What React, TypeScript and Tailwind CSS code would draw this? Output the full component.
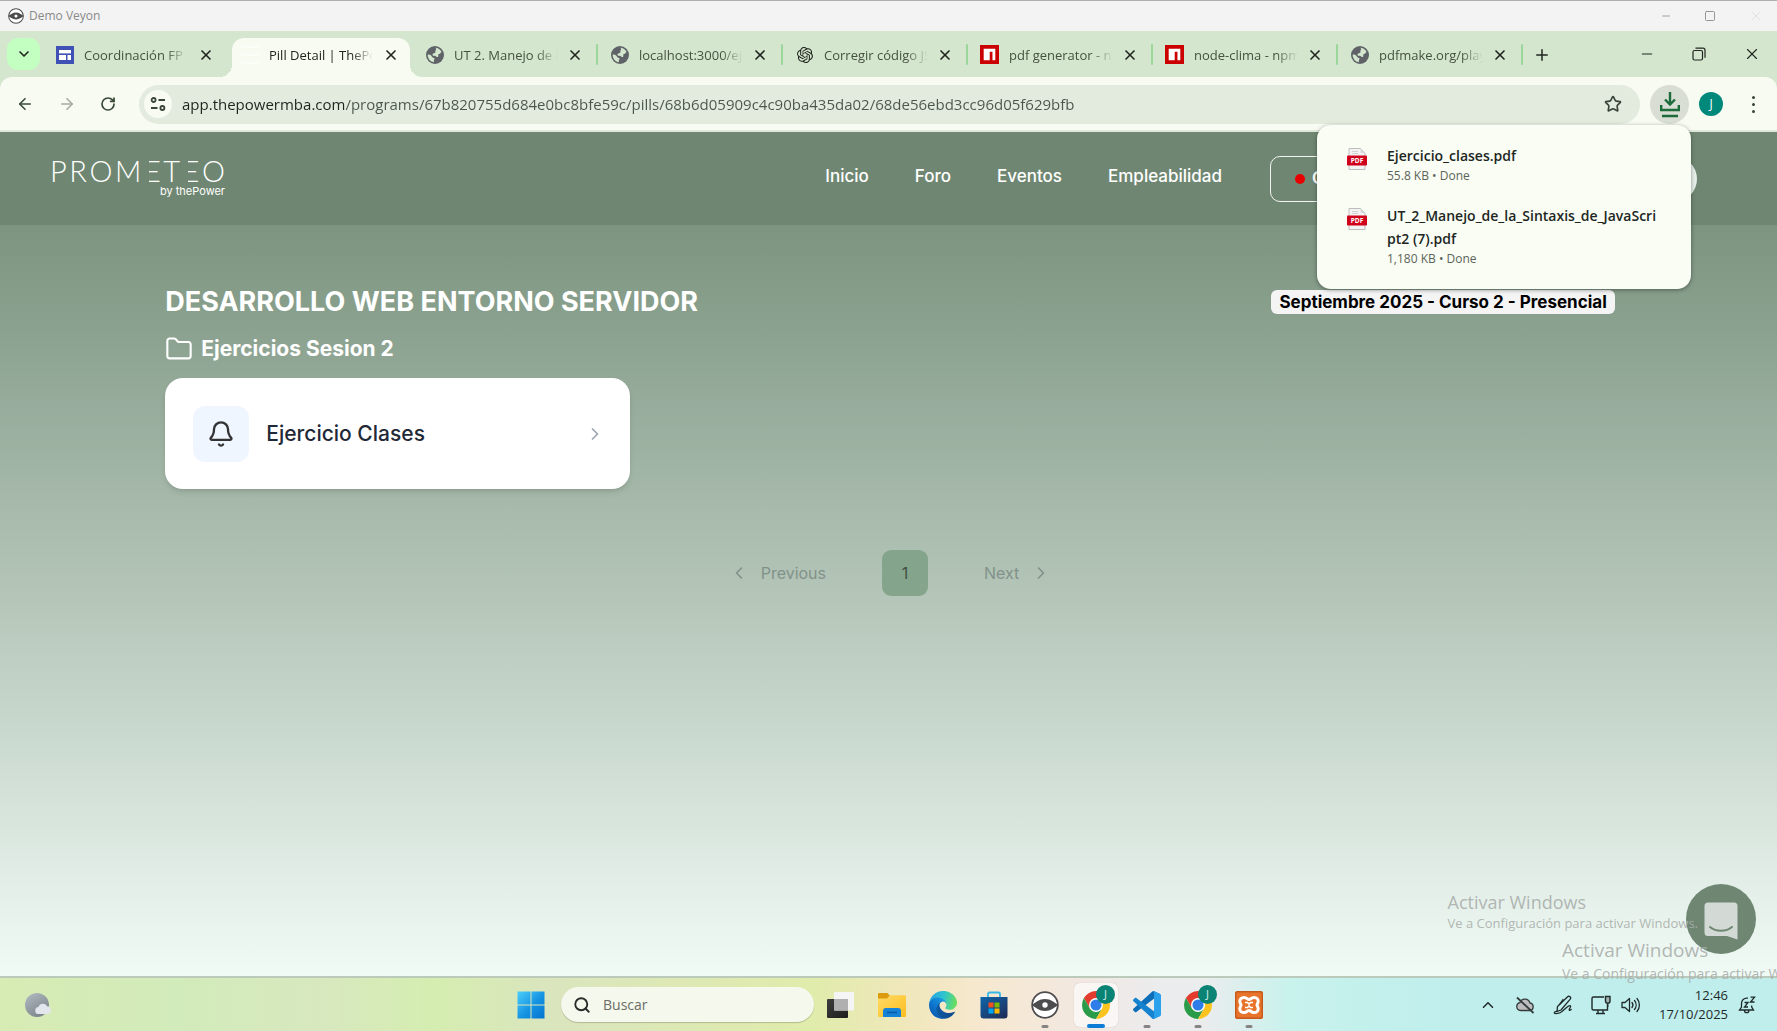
import React from "react";
import {
  ArrowLeft,
  ArrowRight,
  Bell,
  ChevronDown,
  ChevronLeft,
  ChevronRight,
  ChevronUp,
  Folder,
  Minus,
  Plus,
  RotateCw,
  Search,
  Square,
  Star,
  X,
} from "lucide-react";
import { SiOpenai } from "react-icons/si";

function SitesIcon() {
  return (
    <svg viewBox="0 0 18 18" className="size-[18px]" aria-hidden="true">
      <rect width="18" height="18" fill="#3f51b5" />
      <rect x="3" y="4" width="12" height="3.4" fill="#fff" />
      <rect x="3" y="9" width="7" height="5" fill="#fff" />
      <rect x="11.5" y="9" width="3.5" height="5" fill="#fff" />
    </svg>
  );
}

function BlankPageIcon() {
  return (
    <svg viewBox="0 0 18 18" className="size-[18px]" aria-hidden="true">
      <path d="M0 1h18M0 9h18M0 17h18" stroke="#fff" strokeWidth="1" />
    </svg>
  );
}

function GlobeIcon() {
  return (
    <svg viewBox="0 0 24 24" className="size-[18px]" aria-hidden="true">
      <circle cx="12" cy="12" r="12" fill="#5f6368" />
      <path
        d="M12.5 2.4c3.6.2 6.6 2.3 8.2 5.2l-1.6 2.2c-.9 1-2 .8-2.6 1.6-.6.9.5 1.8-.3 2.8-.6.8-1.9.4-2.6-.3-.9-.9-2.600-.4-3.900-.9-1.200-.5-1.200-1.700-.6-2.600.7-1 2.300-.7 3.100-1.500.7-.8.1-1.900.5-2.900.3-.8 1-1.200.8-2.200z"
        fill="#d5e6cf"
      />
      <path
        d="M2.200 11.500c1.700-.2 3.500 0 4.600 1 1 .9 1 2.100 2.100 2.700 1 .5 2.300.4 2.500 1.600.2 1.100-.9 1.700-1 2.800 0 .8.300 1.400.1 2.100A9.900 9.900 0 0 1 2.200 11.500z"
        fill="#d5e6cf"
      />
    </svg>
  );
}

function NpmIcon() {
  return (
    <svg viewBox="0 0 18 18" className="size-[19px]" aria-hidden="true">
      <rect width="18" height="18" fill="#cb0000" />
      <path d="M3.500 3.500h11v11h-2.700V6.300H9.200v8.200H3.500z" fill="#fff" />
    </svg>
  );
}

function EyeLogo({ className }: { className: string }) {
  return (
    <svg viewBox="0 0 28 28" className={className} aria-hidden="true">
      <circle cx="14" cy="14" r="12.800" fill="#fff" stroke="#4d4d4f" strokeWidth="1.800" />
      <path d="M.5 14C5 11.500 8 8 14 8s9 3.500 13.500 6C23 16.500 20 20 14 20S5 16.500.5 14z" fill="#4d4d4f" />
      <circle cx="14" cy="14" r="5" fill="#4d4d4f" />
      <circle cx="14" cy="14" r="2.700" fill="#fff" />
    </svg>
  );
}

function TuneIcon() {
  return (
    <svg viewBox="0 0 16 16" className="size-4" fill="none" stroke="#3a4439" strokeWidth="1.800" aria-hidden="true">
      <circle cx="3.600" cy="4" r="2" />
      <path d="M8.500 4H15M1 12h6.500" />
      <circle cx="12.400" cy="12" r="2" />
    </svg>
  );
}

function DownloadsIcon() {
  return (
    <svg viewBox="0 0 20 28" className="h-7 w-5" fill="none" stroke="#1d6b3a" strokeWidth="2.400" aria-hidden="true">
      <path d="M10 2v12M5 9.500l5 5 5-5M1.200 15v5h17.600v-5M2 26h16" />
    </svg>
  );
}

function RestoreIcon() {
  return (
    <svg viewBox="0 0 14 14" className="size-3.5" fill="none" stroke="#20261f" strokeWidth="1.200" aria-hidden="true">
      <rect x="1" y="3.500" width="9.500" height="9.500" rx="1.500" />
      <path d="M3.500 1.200H11a2 2 0 0 1 2 2v7.500" />
    </svg>
  );
}

function PdfIcon() {
  return (
    <svg viewBox="0 0 20 22" className="h-[22px] w-5 shrink-0" role="img" aria-label="PDF">
      <path d="M2 .5h11.500L18 5v16.500H2z" fill="#f4f4f4" stroke="#bdbdbd" strokeWidth="1" />
      <path d="M13.500.5V5H18z" fill="#d9d9d9" />
      <path d="M5 3.500h6M5 5.500h6" stroke="#d3d3d3" strokeWidth="1" />
      <rect y="7.500" width="20" height="10" rx=".8" fill="#d0021b" />
      <text x="10" y="15" textAnchor="middle" fontSize="6.500" fontWeight="700" fill="#fff" className="font-['Open_Sans',sans-serif]">
        PDF
      </text>
    </svg>
  );
}

function WeatherIcon() {
  return (
    <svg viewBox="0 0 28 28" className="size-7" aria-hidden="true">
      <defs>
        <linearGradient id="moon" x1="0" y1="0" x2="0.600" y2="1">
          <stop offset="0" stopColor="#b3bcc2" />
          <stop offset="1" stopColor="#7d868d" />
        </linearGradient>
      </defs>
      <circle cx="13" cy="14" r="12" fill="url(#moon)" />
      <path d="M14 23a3.500 3.500 0 0 1 .4-6.900 4.800 4.800 0 0 1 9-.6A3.800 3.800 0 0 1 23.800 23z" fill="#e3e6ec" />
    </svg>
  );
}

function WindowsIcon() {
  return (
    <svg viewBox="0 0 28 28" className="size-7" aria-hidden="true">
      <defs>
        <linearGradient id="win" x1="0" y1="0" x2="28" y2="28" gradientUnits="userSpaceOnUse">
          <stop offset="0" stopColor="#4fd0fb" />
          <stop offset="0.550" stopColor="#1492e2" />
          <stop offset="1" stopColor="#0472cf" />
        </linearGradient>
      </defs>
      <path d="M.5.500h13v13H.5zM14.500.500h13v13h-13zM.5 14.500h13v13H.5zM14.500 14.500h13v13h-13z" fill="url(#win)" />
    </svg>
  );
}

function TaskViewIcon() {
  return (
    <svg viewBox="0 0 28 28" className="size-7" aria-hidden="true">
      <defs>
        <linearGradient id="tv" x1="0" y1="0" x2="1" y2="1">
          <stop offset="0" stopColor="#3e3e3e" />
          <stop offset="1" stopColor="#1d1d1d" />
        </linearGradient>
      </defs>
      <rect x="0" y="8" width="21" height="19" rx="1" fill="url(#tv)" />
      <rect x="7" y="1" width="20" height="18.500" rx="1" fill="#f5f5f5" />
      <rect x="7" y="8" width="14" height="11.500" fill="#b0b0b0" />
    </svg>
  );
}

function ExplorerIcon() {
  return (
    <svg viewBox="0 0 28 28" className="size-7" aria-hidden="true">
      <defs>
        <linearGradient id="fold" x1="0" y1="0" x2="1" y2="1">
          <stop offset="0" stopColor="#ffdb66" />
          <stop offset="1" stopColor="#fcbd1f" />
        </linearGradient>
      </defs>
      <path d="M0 3a1 1 0 0 1 1-1h8.500l2.500 3v4H0z" fill="#dc9a0d" />
      <path d="M0 7.500h9l3-3.300h15a1 1 0 0 1 1 1V25a1 1 0 0 1-1 1H1a1 1 0 0 1-1-1z" fill="url(#fold)" />
      <path d="M5 26v-6a3 3 0 0 1 3-3h12a3 3 0 0 1 3 3v6z" fill="#1583d5" />
      <path d="M9 21.500h10" stroke="#0b5aa5" strokeWidth="1.500" />
    </svg>
  );
}

function EdgeIcon() {
  return (
    <svg viewBox="0 0 256 256" className="size-7" aria-hidden="true">
      <defs>
        <linearGradient id="edgeA" x1="60" y1="177" x2="241" y2="177" gradientUnits="userSpaceOnUse">
          <stop offset="0" stopColor="#0c59a4" />
          <stop offset="1" stopColor="#114a8b" />
        </linearGradient>
        <linearGradient id="edgeB" x1="160" y1="84" x2="46" y2="208" gradientUnits="userSpaceOnUse">
          <stop offset="0" stopColor="#1b9de2" />
          <stop offset="0.600" stopColor="#0f7ad0" />
          <stop offset="1" stopColor="#0a62b8" />
        </linearGradient>
        <linearGradient id="edgeC" x1="20" y1="60" x2="240" y2="110" gradientUnits="userSpaceOnUse">
          <stop offset="0" stopColor="#2aa7e0" />
          <stop offset="0.500" stopColor="#2fc5cd" />
          <stop offset="1" stopColor="#66dd62" />
        </linearGradient>
      </defs>
      <path
        fill="url(#edgeA)"
        d="M231 190.500c-3.400 1.800-6.900 3.400-10.500 4.700a101.500 101.500 0 0 1-35.900 6.400c-47.300 0-88.500-32.500-88.500-74.300 0-11.400 6.400-21.900 16.400-27.300-42.800 1.800-53.800 46.400-53.800 72.500 0 73.900 68.100 81.400 82.800 81.400 7.900 0 19.800-2.300 27-4.600l1.300-.4a128.400 128.400 0 0 0 66.600-52.800 4 4 0 0 0-5.400-5.600z"
      />
      <path
        fill="url(#edgeB)"
        d="M105.700 241.400a79.200 79.200 0 0 1-22.700-21.300 80.700 80.700 0 0 1 29.500-120c3.200-1.500 8.500-4.100 15.600-4a32.400 32.400 0 0 1 25.700 13 31.900 31.900 0 0 1 6.300 18.700c0-.2 24.500-79.600-80-79.600-43.900 0-80 41.600-80 78.200a130.200 130.200 0 0 0 12.100 56 128 128 0 0 0 156.400 67 75.500 75.500 0 0 1-62.800-8z"
      />
      <path
        fill="url(#edgeC)"
        d="M152.300 148.900c-.9 1-3.400 2.500-3.400 5.600 0 2.600 1.700 5.200 4.800 7.300 14.400 10.100 41.700 8.800 41.800 8.800 10.700 0 21.100-2.900 30.300-8.300a61.400 61.400 0 0 0 30.400-52.900c.3-22.400-8-37.300-11.300-43.900C223.500 23.900 177.700 0 128 0A128 128 0 0 0 0 126.200c.5-36.500 36.800-66 80-66 3.500 0 23.500.3 42 10.100 16.300 8.500 24.900 18.900 30.800 29.200 6.200 10.700 7.300 24.100 7.300 29.500 0 5.300-2.700 13.300-7.800 19.900z"
      />
    </svg>
  );
}

function StoreIcon() {
  return (
    <svg viewBox="0 0 28 28" className="size-7" aria-hidden="true">
      <defs>
        <linearGradient id="store" x1="0" y1="0" x2="0.800" y2="1">
          <stop offset="0" stopColor="#0f66ab" />
          <stop offset="1" stopColor="#1d2f5c" />
        </linearGradient>
      </defs>
      <path d="M8 7V3a1.500 1.500 0 0 1 1.500-1.500h9A1.500 1.500 0 0 1 20 3v4" fill="none" stroke="#35b8e6" strokeWidth="1.800" />
      <path d="M.5 6h27v18.500a3 3 0 0 1-3 3h-21a3 3 0 0 1-3-3z" fill="url(#store)" />
      <rect x="8.500" y="11.500" width="5" height="5" fill="#f25022" />
      <rect x="14.500" y="11.500" width="5" height="5" fill="#7fba00" />
      <rect x="8.500" y="17.500" width="5" height="5" fill="#00a4ef" />
      <rect x="14.500" y="17.500" width="5" height="5" fill="#ffb900" />
    </svg>
  );
}

function ChromeIcon() {
  return (
    <span className="relative block size-7">
      <svg viewBox="2 2 44 44" className="size-7" aria-hidden="true">
        <circle cx="24" cy="24" r="21" fill="#fff" />
        <path d="M4.950 13a22 22 0 0 1 38.100 0H24L14.470 29.500z" fill="#e33b2e" />
        <path d="M4.950 13l9.520 16.500L24 35l9.530-5.500L24 46A22 22 0 0 1 4.950 13z" fill="#2a9b48" />
        <path d="M43.050 13A22 22 0 0 1 24 46l9.530-16.500L24 13z" fill="#fcc31e" />
        <circle cx="24" cy="24" r="11" fill="#fff" />
        <circle cx="24" cy="24" r="8.700" fill="#2f7de9" />
      </svg>
      <span className="absolute -top-[6px] left-[14px] flex size-[19px] items-center justify-center rounded-full bg-[#0b8374] text-[11px] text-[#d4ece8]">
        J
      </span>
    </span>
  );
}

function CodeIcon() {
  return (
    <svg viewBox="0 0 100 100" className="size-7" aria-hidden="true">
      <path
        d="M96.500 10.800 75.900.9c-2.400-1.150-5.200-.66-7.100 1.200L1.300 63.600c-1.800 1.660-1.800 4.500 0 6.100l5.500 5c1.500 1.350 3.700 1.450 5.300.24L93.400 13.300C96.100 11.200 100 13.100 100 16.500v-.24c0-2.400-1.400-4.600-3.500-5.500z"
        fill="#0e6fb8"
      />
      <path
        d="M96.500 89.200 75.900 99.100c-2.400 1.150-5.200.66-7.100-1.200L1.300 36.400c-1.800-1.660-1.800-4.500 0-6.100l5.500-5c1.500-1.350 3.700-1.450 5.300-.24L93.400 86.700C96.100 88.800 100 86.900 100 83.500v.24c0 2.400-1.400 4.600-3.500 5.500z"
        fill="#1583cf"
      />
      <path
        d="M75.900 99.100c-2.400 1.150-5.200.66-7.100-1.200 2.300 2.300 6.300.7 6.300-2.600V4.700c0-3.300-4-4.900-6.300-2.600 1.900-1.900 4.700-2.400 7.100-1.200l20.600 9.900c2.100 1 3.500 3.200 3.500 5.600v67.200c0 2.400-1.400 4.600-3.500 5.600z"
        fill="#2ba1ec"
      />
    </svg>
  );
}

function XamppIcon() {
  return (
    <svg viewBox="0 0 28 28" className="size-7" aria-hidden="true">
      <rect width="28" height="28" rx="2.500" fill="#e8732a" />
      <rect x=".7" y=".7" width="26.600" height="26.600" rx="2" fill="none" stroke="#c65a1a" strokeWidth="1.400" />
      <path
        d="M9 6.500c-2.600 0-4.200 1.800-4.200 3.800 0 2 1.200 2.700 1.200 3.700s-1.200 1.700-1.200 3.700c0 2 1.600 3.800 4.200 3.800 2.900 0 3.300-2 5-2s2.100 2 5 2c2.600 0 4.200-1.800 4.200-3.800 0-2-1.200-2.700-1.200-3.700s1.200-1.700 1.200-3.700c0-2-1.600-3.800-4.200-3.800-2.900 0-3.300 2-5 2s-2.100-2-5-2z"
        fill="none"
        stroke="#fff"
        strokeWidth="3"
      />
      <path d="M10 11.500h2.500L14 13l1.500-1.500H18M10 16.500h2.500L14 15l1.500 1.500H18" fill="none" stroke="#fff" strokeWidth="1.600" />
    </svg>
  );
}

function CloudOffIcon() {
  return (
    <svg viewBox="0 0 20 20" className="size-5" fill="none" stroke="#333b3b" strokeWidth="1.300" aria-hidden="true">
      <path d="M5.500 15.500a4 4 0 0 1-.6-7.900 5.300 5.300 0 0 1 10.100.4 3.800 3.800 0 0 1 0 7.500z" fill="#bdbcbf" />
      <path d="M2 2.500 18.500 18" strokeWidth="1.800" />
    </svg>
  );
}

function PenIcon() {
  return (
    <svg viewBox="0 0 20 20" className="size-5" fill="none" stroke="#1f2a2a" strokeWidth="1.300" strokeLinecap="round" strokeLinejoin="round" aria-hidden="true">
      <path d="M4.500 11.500 14.600 1.800c1.600-1.400 4 .6 2.600 2.400L8 15l-4 1.300z" />
      <path d="M6.500 9.500 10 4.500M4 16.300c-1.500.2-3 .6-2.700 1.600.5 1.300 5.700.6 7.700-1.500l4-3.400c2-1.700 3.600-2.800 4.500-2.200 1.200.9-2.300 3.700-1.300 4.500.5.400 1.300-.2 2-.8" />
    </svg>
  );
}

function MonitorIcon() {
  return (
    <svg viewBox="0 0 20 20" className="size-5" fill="none" stroke="#1f2a2a" strokeWidth="1.400" aria-hidden="true">
      <path d="M13 2H2.500A1.500 1.500 0 0 0 1 3.500v10A1.500 1.500 0 0 0 2.500 15h14V9.500M7 15v3.500M12 15v3.500M5 18.500h9" />
      <path d="M14.500 1.500h4.500v4.500a2.200 2.200 0 0 1-4.500 0zM16.700 8v4" fill="#9fb5b5" />
    </svg>
  );
}

function SpeakerIcon() {
  return (
    <svg viewBox="0 0 20 20" className="size-5" fill="none" stroke="#1f2a2a" strokeWidth="1.300" strokeLinecap="round" aria-hidden="true">
      <path d="M1 7.500h3l4.500-4v13l-4.500-4H1z" strokeLinejoin="round" />
      <path d="M11 7.500a4 4 0 0 1 0 5M13.500 5.500a7 7 0 0 1 0 9M16 3.500a10 10 0 0 1 0 13" />
    </svg>
  );
}

function SnoozeBellIcon() {
  return (
    <svg viewBox="0 0 18 18" className="size-[18px]" fill="none" stroke="#1f2a2a" strokeWidth="1.300" aria-hidden="true">
      <path d="M10 2.200C5.800 1.500 3.500 4.500 3.500 7.500V11l-2 3h14l-1.800-3V9.500M6.500 14.500a2.200 2.200 0 0 0 4.400 0" />
      <path d="M6.500 6.500h3.500L6.500 11H10M12.500 1.200h4L12.500 6h4" />
    </svg>
  );
}

function ChatIcon() {
  return (
    <svg viewBox="0 0 34 38" className="h-[38px] w-[34px]" aria-hidden="true">
      <path d="M4 .5h26a3.500 3.500 0 0 1 3.500 3.500v33.500L23 34H4a3.500 3.500 0 0 1-3.500-3.500V4A3.500 3.500 0 0 1 4 .5z" fill="#d3dad5" />
      <path d="M6 25c6 5 16 5 22 0" fill="none" stroke="#6f8772" strokeWidth="2" strokeLinecap="round" />
    </svg>
  );
}

const tabs: { title: string; icon: React.ReactNode; active?: boolean; divider?: boolean }[] = [
  { title: "Coordinación FP", icon: <SitesIcon /> },
  { title: "Pill Detail | ThePower", icon: <BlankPageIcon />, active: true },
  { title: "UT 2. Manejo de la", icon: <GlobeIcon />, divider: true },
  { title: "localhost:3000/ejer", icon: <GlobeIcon />, divider: true },
  { title: "Corregir código JS", icon: <SiOpenai className="size-4 text-[#20261f]" />, divider: true },
  { title: "pdf generator - npm", icon: <NpmIcon />, divider: true },
  { title: "node-clima - npm", icon: <NpmIcon />, divider: true },
  { title: "pdfmake.org/playg", icon: <GlobeIcon />, divider: true },
];

function Tab({ title, icon, active, divider }: (typeof tabs)[number]) {
  return (
    <div
      className={
        "relative mt-[7px] flex h-[39px] min-w-0 flex-1 items-center pb-[6px] " +
        (active
          ? "mr-[3px] ml-1 max-w-[178px] rounded-t-xl bg-[#f8fbf2] pl-2 text-[#20261f] before:absolute before:bottom-0 before:-left-3 before:size-3 before:bg-[radial-gradient(circle_at_0_0,transparent_12px,#f8fbf2_12px)] after:absolute after:-right-3 after:bottom-0 after:size-3 after:bg-[radial-gradient(circle_at_100%_0,transparent_12px,#f8fbf2_12px)]"
          : "max-w-[185px] pl-3 text-[#45523f]")
      }
    >
      <button type="button" className="flex min-w-0 flex-1 items-center gap-2.5">
        <span className="flex w-[19px] shrink-0 justify-center">{icon}</span>
        <span className="w-[104px] overflow-hidden text-left text-[13px] leading-5 whitespace-nowrap [mask-image:linear-gradient(90deg,#000_82px,transparent_104px)]">
          {title}
        </span>
      </button>
      <button type="button" aria-label={"Cerrar " + title} className={"shrink-0 text-[#20261f] " + (active ? "mr-2.5" : "mr-[13px]")}>
        <X className="size-4" strokeWidth={2.500} />
      </button>
      {divider ? <span className="h-[21px] w-[2px] shrink-0 rounded-full bg-[#9bd69b]" /> : <span className="w-px shrink-0" />}
    </div>
  );
}

function LogoE() {
  return (
    <span className="relative before:absolute before:top-0 before:left-0 before:h-full before:w-[5px] before:bg-[#6f8772]">E</span>
  );
}

function TaskbarApp({ label, running, active, children }: { label: string; running?: boolean; active?: boolean; children: React.ReactNode }) {
  return (
    <button
      type="button"
      aria-label={label}
      className={"relative flex size-11 items-center justify-center rounded-md " + (active ? "bg-white/60 shadow-[0_0_1px_#00000040]" : "")}
    >
      {children}
      {running && (
        <span
          className={
            "absolute -bottom-px left-1/2 -translate-x-1/2 rounded-full " +
            (active ? "h-1 w-[18px] bg-[#0f7cd6]" : "h-[3px] w-[7px] bg-[#868483]")
          }
        />
      )}
    </button>
  );
}

export default function App() {
  return (
    <div className="relative flex min-h-screen flex-col overflow-hidden bg-[#f0faf5] font-['Open_Sans','Noto_Sans',sans-serif]">
      <div className="flex h-[31px] items-center border-t border-[#b0b0b0] bg-[#f3f3f3] pl-2 pr-[13px] text-xs text-[#8a8a8a]">
        <EyeLogo className="mr-[5px] size-4" />
        <span>Demo Veyon</span>
        <div className="ml-auto flex items-center gap-8">
          <button type="button" aria-label="Minimizar ventana">
            <Minus className="size-3" strokeWidth={1.500} />
          </button>
          <button type="button" aria-label="Maximizar ventana">
            <Square className="size-3" strokeWidth={1.800} />
          </button>
          <button type="button" aria-label="Cerrar ventana" className="text-[#dcdcdc]">
            <X className="size-4" strokeWidth={1.200} />
          </button>
        </div>
      </div>

      <div className="flex h-[46px] items-start bg-[#d5e6cf] pl-[7px]">
        <button type="button" aria-label="Buscar pestañas" className="mt-[7px] mr-[3px] flex h-8 w-[33px] items-center justify-center rounded-[11px] bg-[#c3ffc0] text-[#20261f]">
          <ChevronDown className="size-4" strokeWidth={2.500} />
        </button>
        {tabs.map((tab) => (
          <Tab key={tab.title} {...tab} />
        ))}
        <button type="button" aria-label="Nueva pestaña" className="mt-[15px] ml-[10px] text-[#20261f]">
          <Plus className="size-[18px]" strokeWidth={2} />
        </button>
        <div className="mt-[14px] ml-auto flex items-center gap-[37px] pr-4 text-[#20261f]">
          <button type="button" aria-label="Minimizar">
            <Minus className="size-4" strokeWidth={1.800} />
          </button>
          <button type="button" aria-label="Restaurar">
            <RestoreIcon />
          </button>
          <button type="button" aria-label="Cerrar">
            <X className="size-[18px]" strokeWidth={1.500} />
          </button>
        </div>
      </div>

      <div className="bg-[#d5e6cf]">
        <div className="relative flex h-[55px] items-center rounded-t-xl border-b-2 border-[#e0e8da] bg-[#f8fbf2] pt-px pr-[15px] pl-4">
          <div className="flex w-[123px] items-center gap-6 text-[#3a4a38]">
            <button type="button" aria-label="Atrás">
              <ArrowLeft className="size-[18px]" strokeWidth={2.200} />
            </button>
            <button type="button" aria-label="Adelante" className="text-[#a5ada2]">
              <ArrowRight className="size-[18px]" strokeWidth={2.200} />
            </button>
            <button type="button" aria-label="Recargar">
              <RotateCw className="size-4" strokeWidth={2.600} />
            </button>
          </div>
          <div className="flex h-[39px] flex-1 items-center rounded-full bg-[#e3ebdf] pr-[18px] pl-[5px]">
            <button type="button" aria-label="Información del sitio" className="mr-2.5 flex size-7 shrink-0 items-center justify-center rounded-full bg-[#f8fbf2]">
              <TuneIcon />
            </button>
            <input
              type="text"
              aria-label="Dirección"
              defaultValue="app.thepowermba.com/programs/67b820755d684e0bc8bfe59c/pills/68b6d05909c4c90ba435da02/68de56ebd3cc96d05f629bfb"
              className="min-w-0 flex-1 bg-[linear-gradient(90deg,#1d241d_162px,#4b554a_162px)] bg-clip-text text-[15px] text-transparent outline-none"
            />
            <button type="button" aria-label="Marcador" className="text-[#3a4439]">
              <Star className="size-[18px]" strokeWidth={2.200} />
            </button>
          </div>
          <button type="button" aria-label="Descargas" className="ml-2.5 flex size-[39px] items-center justify-center rounded-full bg-[#d8ded3]">
            <DownloadsIcon />
          </button>
          <button type="button" aria-label="Perfil" className="ml-2.5 flex size-6 items-center justify-center rounded-full bg-[#00897b] text-xs text-white">
            J
          </button>
          <button type="button" aria-label="Menú" className="ml-[21px] flex w-[18px] flex-col items-center gap-1 text-[#3a4439]">
            <span className="size-[3px] rounded-full bg-current" />
            <span className="size-[3px] rounded-full bg-current" />
            <span className="size-[3px] rounded-full bg-current" />
          </button>

          <div className="absolute top-12 right-[86px] z-20 flex w-[374px] flex-col gap-[19px] rounded-[14px] bg-[#fafdf3] pt-[19px] pr-6 pb-[21px] pl-[30px] text-[#20261f] shadow-[0_1px_4px_#00000066]">
            <div className="flex gap-5">
              <div className="pt-1">
                <PdfIcon />
              </div>
              <div className="min-w-0">
                <p className="text-sm leading-[23px] font-semibold">Ejercicio_clases.pdf</p>
                <p className="text-xs leading-[18px] text-[#5a645a]">55.8 KB • Done</p>
              </div>
            </div>
            <div className="flex gap-5">
              <div className="pt-1">
                <PdfIcon />
              </div>
              <div className="min-w-0">
                <p className="text-sm leading-[23px] font-semibold">
                  UT_2_Manejo_de_la_Sintaxis_de_JavaScri
                  <br />
                  pt2 (7).pdf
                </p>
                <p className="text-xs leading-[18px] text-[#5a645a]">1,180 KB • Done</p>
              </div>
            </div>
          </div>
        </div>
      </div>

      <header className="relative flex h-[93px] items-center bg-[#6f8772] pr-20 pb-1 pl-[50px] font-['Inter',sans-serif] text-white">
        <a href="#inicio" className="w-[175px]">
          <span className="flex justify-between font-['Lato',sans-serif] text-[29px] leading-7 font-light">
            <span>P</span>
            <span>R</span>
            <span>O</span>
            <span>M</span>
            <LogoE />
            <span>T</span>
            <LogoE />
            <span>O</span>
          </span>
          <span className="block text-right text-[11px] leading-3">by thePower</span>
        </a>
        <nav className="mr-12 ml-auto flex items-center gap-[46px] text-[17px] font-medium">
          <a href="#inicio">Inicio</a>
          <a href="#foro">Foro</a>
          <a href="#eventos">Eventos</a>
          <a href="#empleabilidad">Empleabilidad</a>
        </nav>
        <button type="button" className="mt-1 mr-[138px] flex h-[46px] w-[243px] items-center gap-[7px] rounded-[10px] border border-white/90 pl-6 text-[17px] font-semibold">
          <span className="size-2.5 rounded-full bg-[#e60000]" />
          Clases
        </button>
        <button type="button" aria-label="Cuenta" className="mt-1 size-[46px] rounded-full bg-[#e6efe9]" />
      </header>

      <main className="flex flex-1 flex-col bg-linear-to-b from-[#7c9480] to-[#f1fbf6] px-[9.300%] pt-[62px] font-['Inter',sans-serif]">
        <div className="flex items-center justify-between">
          <h1 className="text-[27px] leading-[30px] font-bold text-white">DESARROLLO WEB ENTORNO SERVIDOR</h1>
          <p className="relative z-10 -mr-[3px] rounded-md bg-[#f4f4f5] px-2 text-[17px] leading-6 font-bold text-black">Septiembre 2025 - Curso 2 - Presencial</p>
        </div>
        <h2 className="mt-4 flex items-center gap-2 text-[21px] leading-8 font-bold text-white">
          <Folder className="size-7" strokeWidth={1.800} />
          Ejercicios Sesion 2
        </h2>
        <a href="#ejercicio" className="mt-[13px] flex h-[111px] w-[32.100%] items-center rounded-[18px] bg-white pr-[25px] pl-7 shadow-md">
          <span className="mr-[17px] flex size-14 items-center justify-center rounded-xl bg-[#eff6ff]">
            <Bell className="size-7 text-[#333]" strokeWidth={2} />
          </span>
          <span className="text-[21px] font-medium text-[#1f2937]">Ejercicio Clases</span>
          <ChevronRight className="ml-auto size-5 text-[#9ca3af]" strokeWidth={2} />
        </a>
        <nav aria-label="Paginación" className="mt-[61px] ml-[3px] flex items-center justify-center text-base text-[#82928a]">
          <button type="button" className="flex items-center gap-3">
            <ChevronLeft className="size-5" />
            Previous
          </button>
          <button type="button" aria-current="page" className="mx-14 size-[46px] rounded-[9px] bg-[#84a58c] text-[#3f4f43]">
            1
          </button>
          <button type="button" className="flex items-center gap-3">
            Next
            <ChevronRight className="size-5" />
          </button>
        </nav>
      </main>

      <button type="button" aria-label="Abrir chat" className="absolute right-[21px] bottom-[77px] flex size-[70px] items-center justify-center rounded-full bg-[#6f8772] pt-1">
        <ChatIcon />
      </button>
      <div className="absolute right-[79px] bottom-[99px] z-10 whitespace-nowrap text-[#a9aeab]/90">
        <p className="text-lg leading-6">Activar Windows</p>
        <p className="text-[13px] leading-[18px]">Ve a Configuración para activar Windows.</p>
      </div>
      <div className="absolute right-0 bottom-[47px] z-10 w-[215px] overflow-hidden whitespace-nowrap text-[#a9aeab]/90">
        <p className="text-[19px] leading-7">Activar Windows</p>
        <p className="text-sm leading-5">Ve a Configuración para activar Windows.</p>
      </div>

      <footer className="flex h-[55px] items-center border-t-2 border-[#bccabc] bg-[linear-gradient(90deg,#d7ebb4_0%,#d2ebba_12%,#d7e8bf_22%,#d5edb0_30%,#dae5be_38%,#e0ecab_56%,#f1e7bd_63%,#f6e8d0_68%,#f2e8e2_75%,#ebecee_80%,#ebecee_83%,#c8f2ec_89%,#bfeeec_100%)] bg-[length:1450px_100%] bg-[#bfeeec] bg-no-repeat pr-[21px] pl-6">
        <button type="button" aria-label="Tiempo" className="flex flex-1">
          <WeatherIcon />
        </button>
        <div className="flex items-center gap-[7px]">
          <TaskbarApp label="Inicio">
            <WindowsIcon />
          </TaskbarApp>
          <label className="mr-[-2px] ml-px flex h-[35px] w-[253px] items-center gap-3 rounded-full bg-[#f5f8ec] px-3 shadow-[0_1px_1px_#00000033]">
            <Search className="size-[18px] shrink-0 text-[#2b2b2b]" strokeWidth={2.500} />
            <input type="text" aria-label="Buscar" placeholder="Buscar" className="min-w-0 flex-1 text-sm outline-none placeholder:text-[#6a6d66]" />
          </label>
          <TaskbarApp label="Vista de tareas">
            <TaskViewIcon />
          </TaskbarApp>
          <TaskbarApp label="Explorador">
            <ExplorerIcon />
          </TaskbarApp>
          <TaskbarApp label="Edge">
            <EdgeIcon />
          </TaskbarApp>
          <TaskbarApp label="Store">
            <StoreIcon />
          </TaskbarApp>
          <TaskbarApp label="Veyon" running>
            <EyeLogo className="size-7" />
          </TaskbarApp>
          <TaskbarApp label="Chrome" running active>
            <ChromeIcon />
          </TaskbarApp>
          <TaskbarApp label="Code" running>
            <CodeIcon />
          </TaskbarApp>
          <TaskbarApp label="Chrome 2" running>
            <ChromeIcon />
          </TaskbarApp>
          <TaskbarApp label="XAMPP" running>
            <XamppIcon />
          </TaskbarApp>
        </div>
        <div className="flex flex-1 items-center justify-end text-[#1f2a2a]">
          <button type="button" aria-label="Iconos ocultos" className="mr-[18px]">
            <ChevronUp className="size-[18px]" strokeWidth={2} />
          </button>
          <div className="mr-[18px] flex items-center gap-[18px]">
            <CloudOffIcon />
            <PenIcon />
            <MonitorIcon />
            <span className="-ml-2">
              <SpeakerIcon />
            </span>
          </div>
          <time className="mr-2.5 text-right text-[13px] leading-[19px]">
            12:46
            <br />
            17/10/2025
          </time>
          <button type="button" aria-label="Notificaciones">
            <SnoozeBellIcon />
          </button>
        </div>
      </footer>
    </div>
  );
}
